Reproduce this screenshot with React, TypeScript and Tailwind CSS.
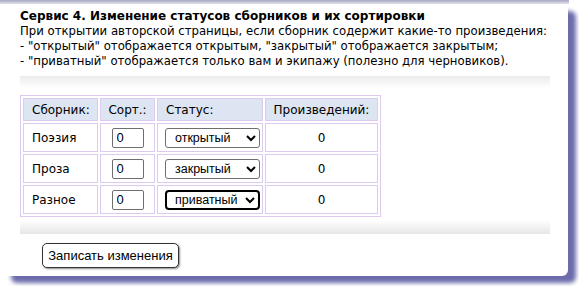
import React from "react";

const rows = [
  { name: "Поэзия", status: "открытый", focus: false },
  { name: "Проза", status: "закрытый", focus: false },
  { name: "Разное", status: "приватный", focus: true },
];

export default function App() {
  return (
    <div className="w-[579px] h-[286px] bg-white overflow-hidden" style={{ fontFamily: '"DejaVu Sans", Verdana, sans-serif' }}>
      <div className="h-[4px] bg-gradient-to-b from-[#a6a6c2] to-[#e4e4ee] mr-[10px]" />
      <div className="ml-[3px] w-[565px] h-[272px] bg-white rounded-[6px] shadow-[8px_7px_4px_#6c6cac] pt-[5px] pl-[17px]">
        <div className="text-[11.7px] leading-[15px] text-black">
          <div className="font-bold text-[12px]">Сервис 4. Изменение статусов сборников и их сортировки</div>
          <div>При открытии авторской страницы, если сборник содержит какие-то произведения:</div>
          <div>- "открытый" отображается открытым, "закрытый" отображается закрытым;</div>
          <div>- "приватный" отображается только вам и экипажу (полезно для черновиков).</div>
        </div>
        <div className="mt-[7px] w-[530px] h-[158px] pt-[19px] bg-[linear-gradient(to_bottom,#ebebeb_0px,#ffffff_12px,#ffffff_calc(100%-14px),#e6e6e6_100%)]">
          <table className="border border-[#dccbee] border-separate border-spacing-[2px] text-[12px] text-black">
            <thead>
              <tr className="h-[23px]">
                <th className="w-[75px] border border-[#dccbee] bg-[#dce5f1] font-normal text-left pl-[8px]">Сборник:</th>
                <th className="w-[55px] border border-[#dccbee] bg-[#dce5f1] font-normal text-center">Сорт.:</th>
                <th className="w-[106px] border border-[#dccbee] bg-[#dce5f1] font-normal text-left pl-[8px]">Статус:</th>
                <th className="w-[113px] border border-[#dccbee] bg-[#dce5f1] font-normal text-center">Произведений:</th>
              </tr>
            </thead>
            <tbody>
              {rows.map((r) => (
                <tr key={r.name} className="h-[29px]">
                  <td className="border border-[#dccbee] pl-[8px]">{r.name}</td>
                  <td className="border border-[#dccbee] text-center">
                    <input
                      readOnly
                      value="0"
                      className="w-[32px] h-[20px] border border-[#6e6e6e] rounded-[2px] px-[4px] text-[13px] bg-white align-middle"
                      style={{ fontFamily: '"Liberation Sans", Arial, sans-serif' }}
                    />
                  </td>
                  <td className="border border-[#dccbee] pl-[7px]">
                    <select
                      defaultValue={r.status}
                      className={
                        r.focus
                          ? "w-[95px] h-[20px] border-2 border-black rounded-[4px] pl-[4px] text-[12.5px] bg-white align-middle"
                          : "w-[95px] h-[20px] border border-[#6e6e6e] rounded-[3px] pl-[5px] text-[12.5px] bg-white align-middle"
                      }
                      style={{ fontFamily: '"Liberation Sans", Arial, sans-serif' }}
                    >
                      <option value="открытый">открытый</option>
                      <option value="закрытый">закрытый</option>
                      <option value="приватный">приватный</option>
                    </select>
                  </td>
                  <td className="border border-[#dccbee] text-center">0</td>
                </tr>
              ))}
            </tbody>
          </table>
        </div>
        <button
          className="mt-[9px] ml-[22px] w-[137px] h-[25px] border border-[#333] rounded-[5px] bg-white shadow-[1px_1px_2px_#888] text-[13px] text-black"
          style={{ fontFamily: '"Liberation Sans", Arial, sans-serif' }}
        >
          Записать изменения
        </button>
      </div>
    </div>
  );
}
